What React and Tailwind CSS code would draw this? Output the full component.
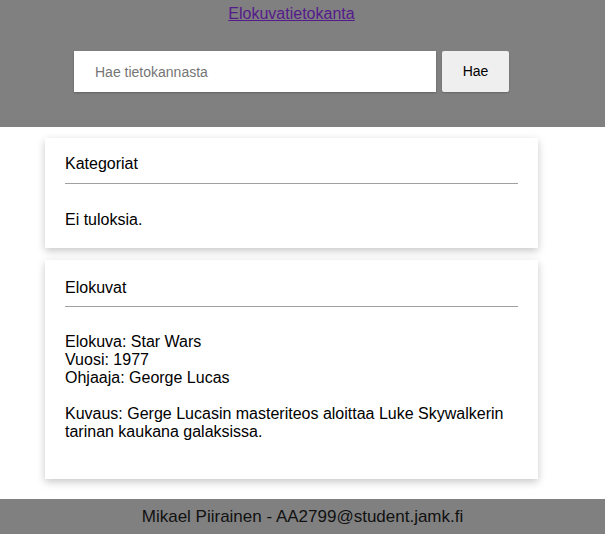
import { useState } from "react";

const movies = [
  {
    nimi: "Star Wars",
    vuosi: 1977,
    ohjaaja: "George Lucas",
    kuvaus: "Gerge Lucasin masteriteos aloittaa Luke Skywalkerin tarinan kaukana galaksissa.",
  },
];

const Card = ({ title, children, extra }) => (
  <div
    className={`bg-white px-[20px] shadow-[0_3px_8px_rgba(0,0,0,0.22)] ${
      extra ? "pt-[19px] pb-[38px]" : "pt-[17px] pb-[19px]"
    }`}
  >
    <h2 className="text-[16px] leading-[18px] font-normal">{title}</h2>
    <div className={`h-px bg-[#a0a0a0] ${extra ? "mt-[9px]" : "mt-[10px]"}`}></div>
    <div className={extra ? "mt-[26px]" : "mt-[27px]"}>{children}</div>
  </div>
);

const App = () => {
  const [query, setQuery] = useState("");

  return (
    <div
      className="min-h-[534px] flex flex-col text-black"
      style={{ fontFamily: '"Liberation Sans", Arial, sans-serif' }}
    >
      {/* Header */}
      <div className="bg-[#808080] h-[127px]">
        <div className="w-[583px] flex flex-col items-center">
          <a
            href="#"
            className="mt-[5px] text-[16px] leading-[18px] text-[#551a8b] underline"
          >
            Elokuvatietokanta
          </a>
          <div className="mt-[28px] flex gap-[6px]">
            <input
              type="text"
              value={query}
              onChange={(e) => setQuery(e.target.value)}
              placeholder="Hae tietokannasta"
              className="w-[362px] h-[41px] bg-white px-[21px] text-[14px] placeholder:text-[#757575] outline-none shadow-[0_1px_2px_rgba(0,0,0,0.25)]"
            />
            <button className="w-[67px] h-[41px] bg-[#efefef] text-[14px] font-normal rounded-[2px] shadow-[0_1px_2px_rgba(0,0,0,0.2)]">
              Hae
            </button>
          </div>
        </div>
      </div>

      {/* Content */}
      <div className="w-[583px] px-[45px] mt-[11px] flex flex-col gap-[12px]">
        <Card title="Kategoriat">
          <p className="text-[16px] leading-[18px]">Ei tuloksia.</p>
        </Card>
        <Card title="Elokuvat" extra>
          {movies.map((m, i) => (
            <div key={i} className="text-[16px] leading-[18px]">
              Elokuva: {m.nimi}
              <br />
              Vuosi: {m.vuosi}
              <br />
              Ohjaaja: {m.ohjaaja}
              <br />
              <br />
              Kuvaus: {m.kuvaus}
            </div>
          ))}
        </Card>
      </div>

      {/* Footer */}
      <div className="mt-[20px] bg-[#808080] h-[35px] flex items-center justify-center text-[17px] text-[#111]">
        Mikael Piirainen - AA2799@student.jamk.fi
      </div>
    </div>
  );
};

export default App;
